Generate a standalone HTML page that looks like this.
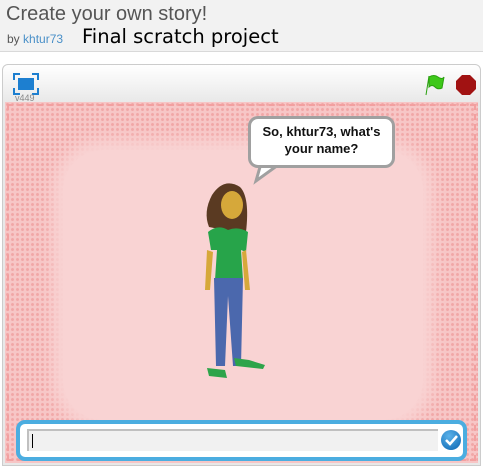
<!DOCTYPE html>
<html><head><style>
body{margin:0;width:483px;height:466px;overflow:hidden;background:#fff;font-family:"Liberation Sans",sans-serif;position:relative}
.hdr{position:absolute;left:0;top:0;width:483px;height:51px;background:#f2f2f2;border-bottom:1px solid #d9d9d9}
.t{position:absolute;left:6px;top:3px;font-size:20px;color:#555}
.by{position:absolute;left:7px;top:32px;font-size:12px;color:#555}
.by span{color:#4a90c8}
.fs{position:absolute;left:82px;top:25px;font-size:19.5px;color:#000;font-family:"DejaVu Sans",sans-serif}
.player{position:absolute;left:2px;top:64px;width:477px;height:400px;border:1px solid #ccc;border-radius:6px 6px 0 0;background:linear-gradient(#fff,#e8e8e8 38px)}
.stage{position:absolute;left:5px;top:102px;width:473px;height:361px;background:#f7c6c6;overflow:hidden}
.lace{position:absolute;inset:0;background:
radial-gradient(circle,#ee9a9a 1.2px,transparent 1.8px) 0 0/5px 5px;opacity:.7}
.inner{position:absolute;left:58px;top:48px;width:360px;height:270px;background:#f9d3d3;border-radius:40px;box-shadow:0 0 14px 10px #f9d3d3}
.edge{position:absolute;inset:2px;border:2px dashed #f2a0a0}
.bubble{position:absolute;left:248px;top:116px;width:141px;height:42px;background:#fff;border:3px solid #a0a0a0;border-radius:10px;font-weight:bold;font-size:13px;text-align:center;line-height:17px;padding-top:4px;box-sizing:content-box;font-family:"Liberation Sans",sans-serif;color:#111}
.ask{position:absolute;left:16px;top:420px;width:443px;height:33px;background:#fff;border:4px solid #4bade0;border-radius:9px}
.inp{position:absolute;left:7px;top:5px;width:411px;height:22px;background:#f1f1f1;border-top:2px solid #c0c0c0;border-left:2px solid #c0c0c0;box-sizing:border-box}
.cur{position:absolute;left:3px;top:3px;width:1px;height:14px;background:#000}
.chk{position:absolute;left:421px;top:6px;width:20px;height:20px;border-radius:50%;background:radial-gradient(circle at 40% 30%,#5ab2ea,#0a64b0)}
</style></head><body>
<div class="hdr"><div class="t">Create your own story!</div><div class="by">by <span>khtur73</span></div><div class="fs">Final scratch project</div></div>
<div class="player">
<svg style="position:absolute;left:10px;top:8px" width="26" height="22"><path d="M1 7V1h6M19 1h6v6M25 15v6h-6M7 21H1v-6" stroke="#1d7fd0" stroke-width="2" fill="none"/><rect x="5" y="5" width="16" height="12" fill="#1d7fd0"/></svg>
<div style="position:absolute;left:12px;top:28px;font-size:9px;color:#888">v449</div>
<svg style="position:absolute;left:420px;top:9px" width="22" height="22"><path d="M3 21L6 2M6 3q5-3 9 0t6 0l-2 11q-4 2-7-1t-6 0z" fill="#3ec81a" stroke="#2aa010"/></svg>
<svg style="position:absolute;left:452px;top:9px" width="22" height="22"><polygon points="7,1 15,1 21,7 21,15 15,21 7,21 1,15 1,7" fill="#a11212"/></svg>
</div>
<div class="stage"><div class="lace"></div><div class="edge"></div><div class="inner"></div></div>
<svg style="position:absolute;left:0;top:0" width="483" height="466">
<path d="M262 160 L256 181 L285 160Z" fill="#fff" stroke="#a0a0a0" stroke-width="3"/>
<path d="M212 195q12-18 28-8 10 10 6 45l-12 0-25 -5q-6-15 3-32z" fill="#5a3a22"/>
<ellipse cx="232" cy="205" rx="11" ry="14" fill="#d6a83a"/>
<path d="M208 232q10-8 20-2 10-4 20 2l-2 20-5 -2 2 30h-28l2-30-6 0z" fill="#27a44a"/>
<path d="M207 250l-2 40h5l3-38zM246 250l4 40h-5l-3-38z" fill="#d6a83a"/>
<path d="M214 278h29l-2 88h-8l-5-70-3 70h-9z" fill="#4b68ad"/>
<path d="M207 368l18 2 2 8-18-2zM234 358l15 2 16 5-2 4-27 -3z" fill="#2ea44a"/>
</svg>
<div class="bubble">So, khtur73, what's<br>your name?</div>
<div class="ask"><div class="inp"><div class="cur"></div></div><div class="chk"><svg width="20" height="20"><path d="M5 10l4 4 7-8" stroke="#fff" stroke-width="2.5" fill="none"/></svg></div></div>
</body></html>
